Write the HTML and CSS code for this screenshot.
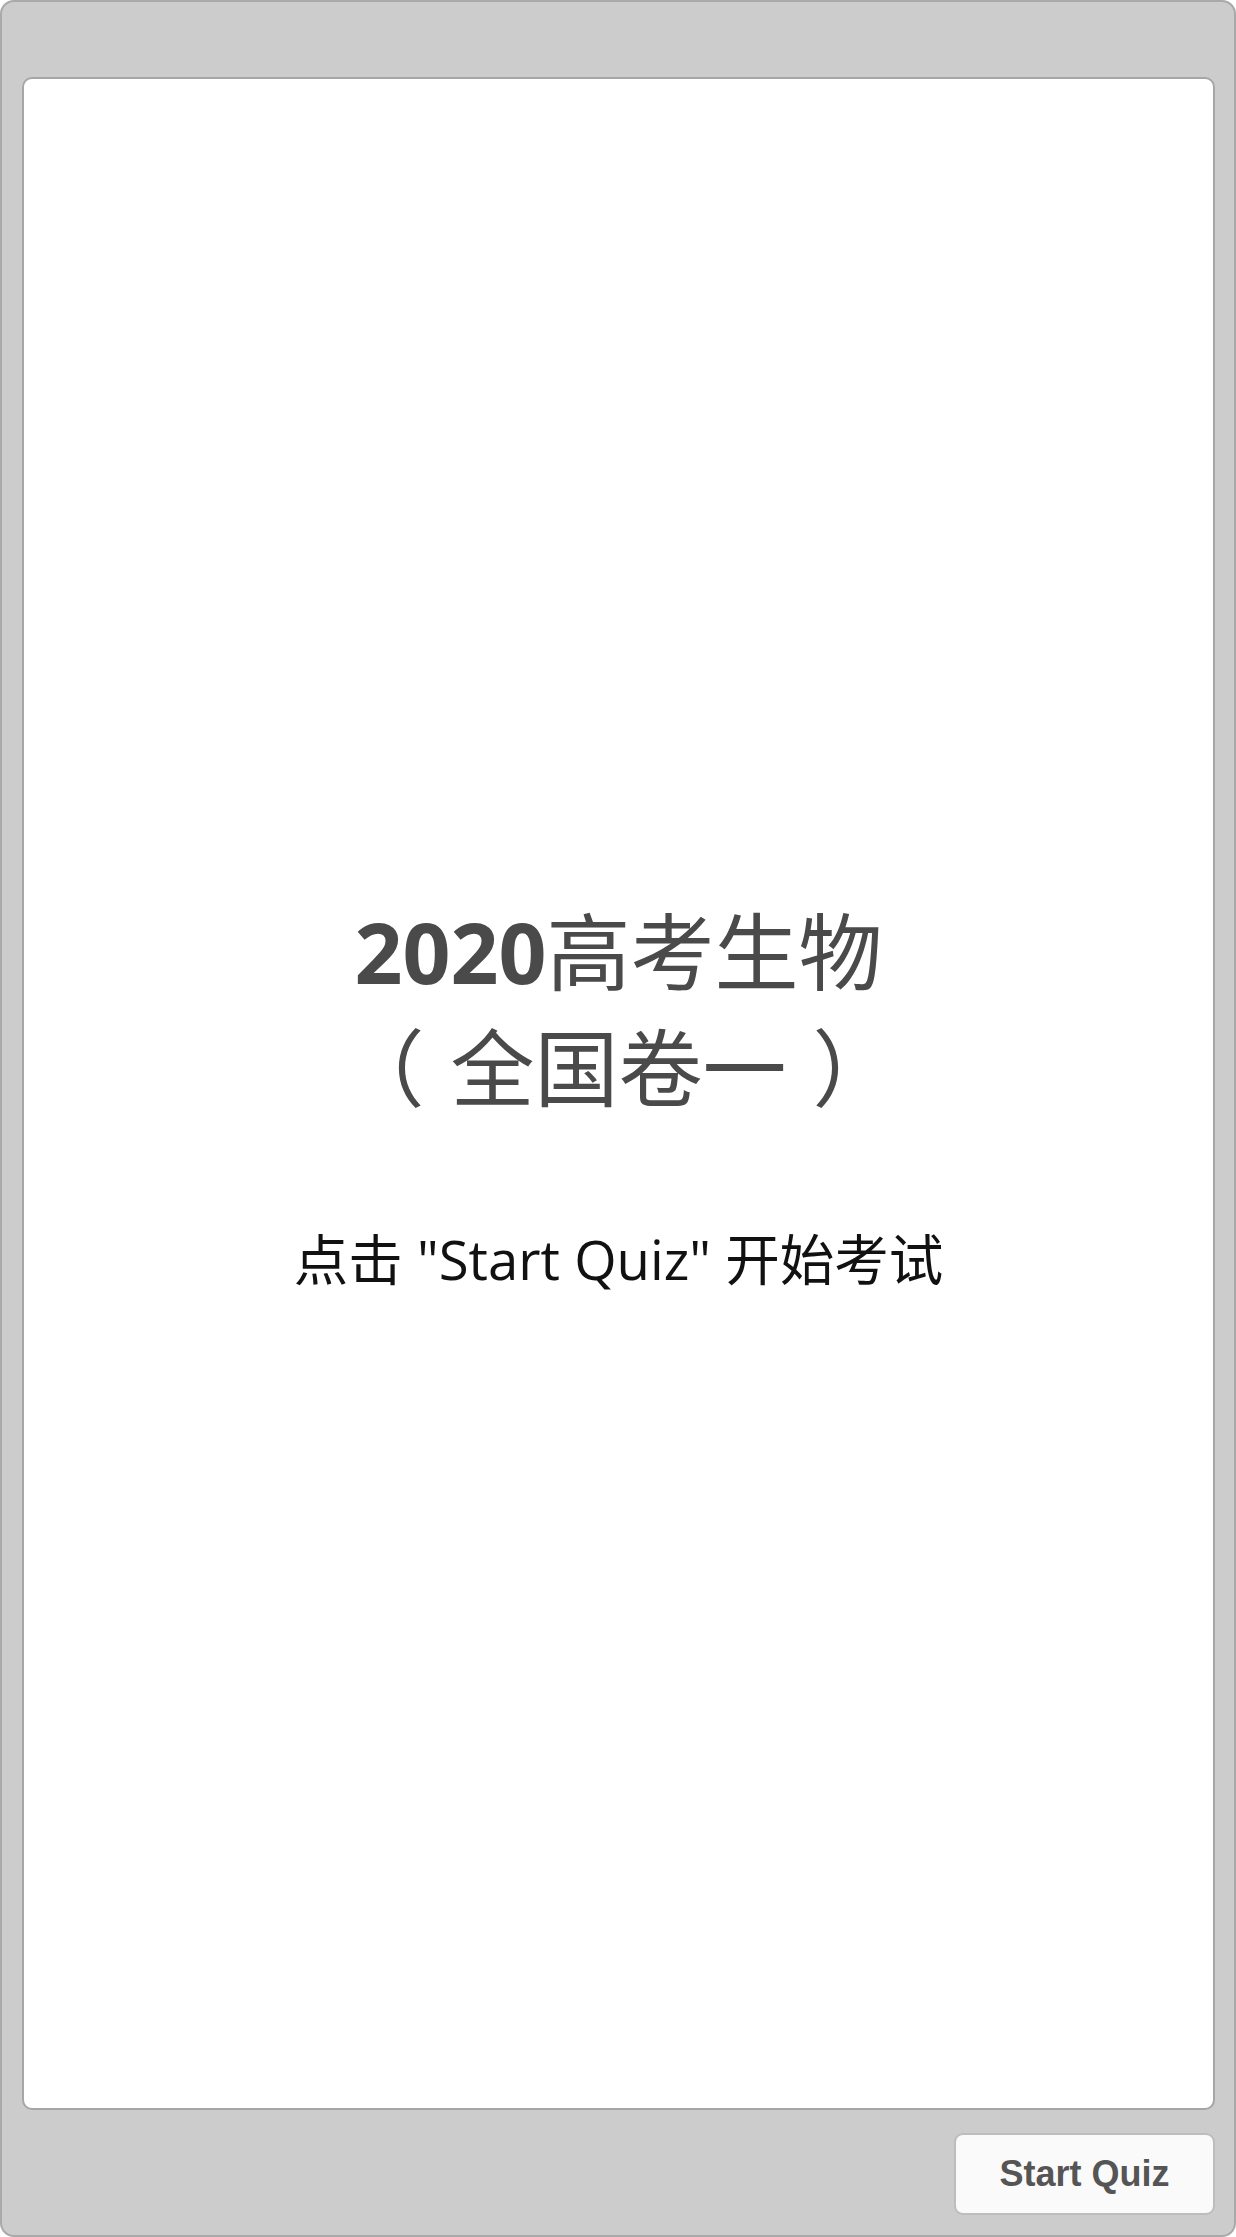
FILE: index.html
```html
<!DOCTYPE html>
<html lang="zh">
<head>
<meta charset="utf-8">
<title>2020高考生物</title>
<link rel="stylesheet" href="styles.css">
</head>
<body>
<div class="frame">
  <main class="panel">
    <div class="intro">
      <h1 class="title"><span class="num">2020</span><span class="cjk">高考生物</span><br><span class="cjk"><span class="paren-open">（</span>全国卷一<span class="paren-close">）</span></span></h1>
      <p class="hint">点击 "Start Quiz" 开始考试</p>
    </div>
  </main>
  <footer class="footer">
    <button class="start-btn" type="button">Start Quiz</button>
  </footer>
</div>
</body>
</html>
```
FILE: styles.css
```css
html, body {
  margin: 0;
  padding: 0;
  background: #ffffff;
}

.frame {
  box-sizing: border-box;
  width: 1236px;
  height: 2237px;
  background: #cccccc;
  border: 2px solid #a9a9a9;
  border-radius: 14px;
  padding: 75px 19px 0 20px;
  display: flex;
  flex-direction: column;
}

.panel {
  flex: 1;
  background: #ffffff;
  border: 2px solid #a6a6a6;
  border-radius: 10px;
  display: flex;
  align-items: center;
  justify-content: center;
}

.intro {
  text-align: center;
  text-spacing-trim: space-all;
}

.title {
  margin: 0;
  font-family: "Open Sans", "Noto Sans CJK SC", sans-serif;
  font-size: 84px;
  line-height: 116px;
  color: #4a4a4a;
  text-spacing-trim: space-all;
}

.title .num {
  font-weight: 700;
}

.title .cjk {
  font-weight: 400;
}

.paren-open {
  margin-left: -26px;
  margin-right: 26px;
}

.paren-close {
  margin-left: 26px;
  margin-right: -26px;
}

.hint {
  margin: 98px 0 0;
  font-family: "Open Sans", "Noto Sans CJK SC", sans-serif;
  font-size: 54.5px;
  line-height: 70px;
  color: #111111;
}

.footer {
  height: 125px;
  display: flex;
  justify-content: flex-end;
  align-items: flex-start;
  padding-top: 23px;
  box-sizing: border-box;
}

.start-btn {
  width: 261px;
  height: 82px;
  background: #fafafa;
  border: 2px solid #bdbdbd;
  border-radius: 9px;
  font-family: "Liberation Sans", Arial, sans-serif;
  font-weight: 700;
  font-size: 36px;
  color: #555555;
  padding: 0;
}
```
